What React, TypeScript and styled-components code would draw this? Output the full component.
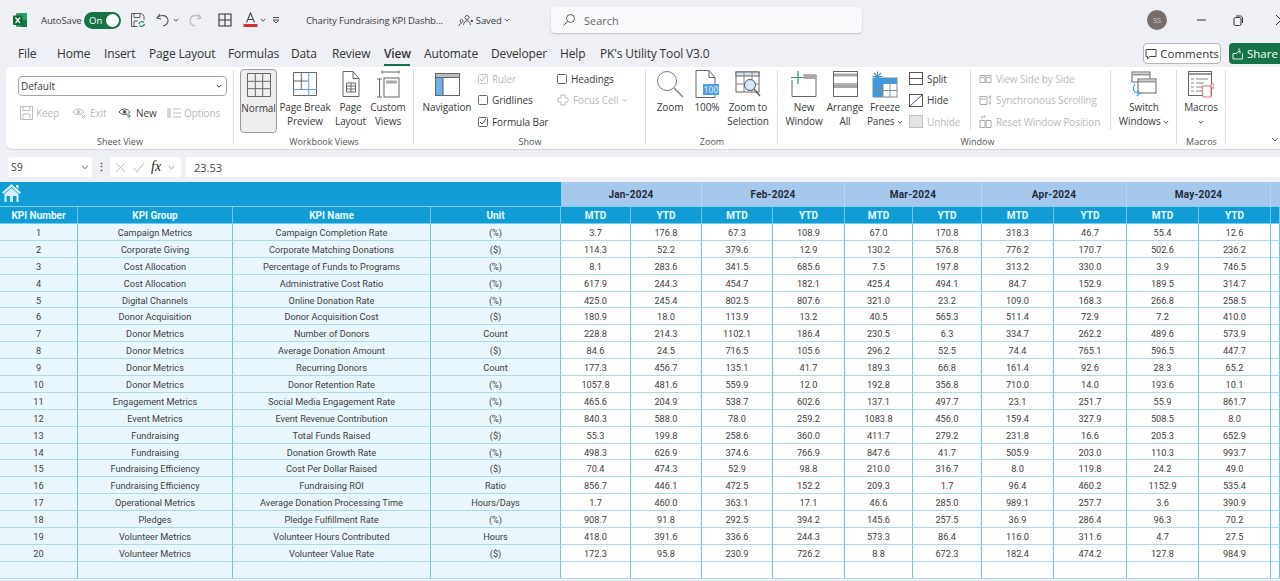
import React from 'react';
import styled, { createGlobalStyle } from 'styled-components';

const Global = createGlobalStyle`
  html, body { margin: 0; padding: 0; height: 581px; overflow: hidden; background: #eef0f5; }
  * { box-sizing: border-box; }
  #root { height: 581px; overflow: hidden; font-family: "Open Sans", "Noto Sans", sans-serif; }
`;

const Window = styled.div`display:flex;flex-direction:column;width:1280px;height:581px;overflow:hidden;background:#eef0f5;color:#333;`;

/* title bar */
const TitleBar = styled.div`display:flex;align-items:center;height:40px;flex:none;position:relative;`;
const Spot = styled.div<{ $w: number; $ml?: number }>`
  display:flex;align-items:center;flex:none;width:${p => p.$w}px;margin-left:${p => p.$ml ?? 0}px;gap:2px;
`;
const SmallLabel = styled.span`font-size:9.5px;color:#3a3a3a;white-space:nowrap;letter-spacing:-.12px;`;
const Toggle = styled.div`
  width:37px;height:17px;flex:none;border-radius:9px;background:#157347;color:#fff;font-size:9.5px;display:flex;align-items:center;
  justify-content:space-between;padding:0 2px 0 5px;
  &::after{content:"";width:13px;height:13px;border-radius:50%;background:#fff;}
`;
const SearchBox = styled.div`
  width:311px;height:26px;margin-left:31px;flex:none;background:#f8f9fb;border-radius:4px;box-shadow:0 1px 2px rgba(0,0,0,.2);
  display:flex;align-items:center;gap:8px;padding-left:11px;font-size:11px;color:#666;
`;
const Avatar = styled.div`
  width:20px;height:20px;border-radius:50%;background:#776e6b;color:#cfc8c5;font-size:7.5px;display:flex;align-items:center;justify-content:center;
  margin-left:285px;flex:none;
`;
const WinBtn = styled.div<{ $ml: number }>`margin-left:${p => p.$ml}px;display:flex;flex:none;`;

/* tabs */
const TabRow = styled.div`display:flex;align-items:center;height:27px;flex:none;padding-left:18px;position:relative;`;
const Tab = styled.div<{ $active?: boolean; $w: number }>`
  flex:none;width:${p => p.$w}px;font-size:12px;line-height:27px;height:27px;color:#333;white-space:nowrap;position:relative;letter-spacing:-.15px;
  font-weight:${p => (p.$active ? 600 : 400)};
  ${p => p.$active && `&::after{content:"";position:absolute;left:0;width:26px;bottom:1px;height:2px;background:#1a6e45;}`}
`;
const TabEnd = styled.div`margin-left:auto;display:flex;align-items:center;gap:8px;`;
const Comments = styled.div`
  width:78px;height:21px;border:1px solid #b5b5b5;border-radius:4px;background:#fff;font-size:11.5px;display:flex;align-items:center;justify-content:center;gap:3px;color:#333;
`;
const Share = styled.div`
  width:51px;height:21px;border-radius:4px 0 0 4px;background:#157347;color:#fff;font-size:11.5px;display:flex;align-items:center;gap:3px;padding-left:3px;
`;

/* ribbon */
const Ribbon = styled.div`
  margin-left:6px;height:82px;flex:none;background:#fff;border-radius:6px 0 0 6px;display:flex;box-shadow:0 1px 1px rgba(0,0,0,.12);position:relative;
`;
const Group = styled.div<{ $w: number; $last?: boolean }>`
  width:${p => p.$w}px;flex:none;display:flex;flex-direction:column;position:relative;
  ${p => !p.$last && `&::after{content:"";position:absolute;right:0;top:3px;bottom:5px;width:1px;background:#dcdcdc;}`}
`;
const GroupBody = styled.div<{ $pl: number }>`height:69px;flex:none;display:flex;padding:2px 0 0 ${p => p.$pl}px;`;
const GroupLabel = styled.div`height:13px;font-size:9px;line-height:12px;text-align:center;color:#555;flex:none;`;
const Big = styled.div<{ $w: number; $ml?: number; $sel?: boolean }>`
  width:${p => p.$w}px;margin-left:${p => p.$ml ?? 0}px;height:${p => (p.$sel ? 64 : 65)}px;flex:none;display:flex;flex-direction:column;align-items:center;
  font-size:10px;line-height:14px;text-align:center;color:#3a3a3a;letter-spacing:-.1px;white-space:nowrap;
  ${p => p.$sel && `background:#eeeeee;border:1px solid #9a9a9a;border-radius:4px;`}
`;
const BigIcon = styled.div`height:28px;flex:none;display:flex;align-items:center;justify-content:center;margin-top:1px;`;
const BigText = styled.div`margin-top:2px;`;
const Column = styled.div<{ $w: number; $ml?: number }>`
  width:${p => p.$w}px;margin-left:${p => p.$ml ?? 0}px;flex:none;display:flex;flex-direction:column;margin-top:-1px;
`;
const Line = styled.div<{ $off?: boolean }>`
  height:21.5px;display:flex;align-items:center;gap:4px;font-size:10px;white-space:nowrap;letter-spacing:-.1px;color:${p => (p.$off ? '#b9b9b9' : '#3a3a3a')};
`;
const Check = styled.span<{ $off?: boolean }>`
  width:10px;height:10px;border:1px solid ${p => (p.$off ? '#c4c4c4' : '#666')};border-radius:1.5px;flex:none;display:flex;align-items:center;justify-content:center;background:#fff;
`;
const StyleSelect = styled.div`
  width:209px;height:20px;margin:7px 0 0 12px;border:1px solid #a5a5a5;border-radius:4px;font-size:10px;display:flex;align-items:center;justify-content:space-between;padding:0 4px 0 2px;color:#3a3a3a;
`;
const SheetCol = styled.div`display:flex;flex-direction:column;`;
const ViewRow = styled.div`display:flex;margin:7px 0 0 14px;`;
const ViewItem = styled.div<{ $w: number; $off?: boolean }>`
  width:${p => p.$w}px;height:20px;flex:none;display:flex;align-items:center;gap:3px;font-size:10px;letter-spacing:-.1px;color:${p => (p.$off ? '#b9b9b9' : '#3a3a3a')};
`;
const SubSep = styled.div`width:1px;height:60px;background:#dcdcdc;margin-top:1px;flex:none;`;
const Corner = styled.div`position:absolute;right:2px;bottom:6px;display:flex;`;

/* formula bar */
const FormulaBar = styled.div`display:flex;align-items:center;height:20px;margin-top:8px;flex:none;`;
const NameBox = styled.div`
  width:84px;height:20px;margin-left:8px;background:#fff;border-radius:2px;font-size:10.5px;display:flex;align-items:center;justify-content:space-between;padding:0 3px;color:#444;flex:none;
`;
const Dots = styled.div`width:18px;text-align:center;font-size:11px;font-weight:700;color:#555;flex:none;line-height:20px;`;
const FxBox = styled.div`
  width:71px;height:20px;margin-left:0;background:#fff;border-radius:2px;display:flex;align-items:center;gap:7px;padding-left:5px;flex:none;
`;
const FxText = styled.span`font-family:"Liberation Serif",serif;font-style:italic;font-weight:400;font-size:14px;color:#222;margin-left:-1px;`;
const FormulaInput = styled.div`
  flex:1;height:20px;margin-left:5px;background:#fff;font-size:11px;display:flex;align-items:center;padding-left:8px;color:#444;
`;

/* sheet */
const Sheet = styled.div`
  margin-top:5px;display:grid;flex:none;background:#fff;
  grid-template-columns:78px 155px 198px 130px 70px 71px 71px 72px 68px 69px 72px 73px 72px 72px 9px;
  grid-template-rows:25px 17px repeat(21,16.9px);
  font-family:Roboto,"Liberation Sans",sans-serif;
`;
const Banner = styled.div`
  grid-column:span 4;background:#129cd6;border-bottom:1px solid #7fd0ee;display:flex;align-items:flex-start;padding:1px 0 0 1px;
`;
const Month = styled.div`
  grid-column:span 2;background:#a5c8ec;border-right:1px solid #b9d5f0;border-bottom:1px solid #7fd0ee;font-size:10px;font-weight:700;color:#1f2a3a;letter-spacing:.2px;
  display:flex;align-items:center;justify-content:center;
`;
const MonthStub = styled.div`background:#a5c8ec;border-bottom:1px solid #7fd0ee;`;
const Head = styled.div`
  background:#129cd6;border-right:1px solid #6cc8ea;border-bottom:1px solid #74cbe9;color:#e9faff;font-size:10px;font-weight:700;padding-top:1px;
  display:flex;align-items:center;justify-content:center;white-space:nowrap;
`;
const Cell = styled.div<{ $tint?: boolean }>`
  background:${p => (p.$tint ? '#e9f6fc' : '#fff')};border-right:1px solid #6fc4e4;border-bottom:1px solid #a8dbee;font-size:9.2px;color:#3e3e3e;padding-top:1px;
  display:flex;align-items:center;justify-content:center;white-space:nowrap;overflow:hidden;
`;

/* icons */
const S = { fill: 'none', stroke: '#5c5c5c', strokeWidth: 1 } as const;
const Sv = ({ w, h, children }: { w: number; h: number; children: React.ReactNode }) => (
  <svg width={w} height={h} viewBox={`0 0 ${w} ${h}`} style={{ flex: 'none', display: 'inline-block', verticalAlign: 'middle' }}>{children}</svg>
);
const Chev = ({ c = '#555', s = 6 }: { c?: string; s?: number }) => (
  <Sv w={s} h={s}><path d={`M.8 ${s * .32}L${s / 2} ${s * .7}L${s - .8} ${s * .32}`} fill="none" stroke={c} strokeWidth="1" /></Sv>
);
const Logo = () => (
  <Sv w={16} h={16}>
    <rect x="4" y="1" width="11" height="14" rx="1" fill="#33a06a" />
    <rect x="9" y="1" width="6" height="7" fill="#21a366" />
    <rect x="9" y="8" width="6" height="7" fill="#107c41" />
    <rect x="1" y="3.5" width="9.5" height="9.5" rx="1" fill="#0d6a38" />
    <path d="M3.5 5.5l4.5 5.5M8 5.5L3.5 11" stroke="#fff" strokeWidth="1.2" />
  </Sv>
);
const SaveIco = () => (
  <Sv w={16} h={16}>
    <path d="M1.5 1.5h10l2.5 2.5v4M1.5 1.5v13h6" {...S} />
    <path d="M4 1.5v4h6v-4M4 14V9h4" {...S} />
    <path d="M9 12a3 3 0 0 1 5-1.5M14.5 12a3 3 0 0 1-5 1.5" fill="none" stroke="#2f8f5b" strokeWidth="1.2" />
  </Sv>
);
const Undo = ({ off }: { off?: boolean }) => (
  <Sv w={16} h={16}>
    <path d={off ? 'M11 2l3 4-4 1M14 6C10 2 4 3 3 8c-.5 3 2 5.500 5 6' : 'M5 2L2 6l4 1M2 6c4-4 10-3 11 2 .5 3-2 5.500-5 6'} fill="none" stroke={off ? '#b5b5b5' : '#555'} strokeWidth="1.1" />
  </Sv>
);
const Borders = () => (
  <Sv w={14} h={14}><path d="M1 1h12v12H1zM7 1v12M1 7h12" fill="none" stroke="#333" strokeWidth="1.1" /></Sv>
);
const FontColor = () => (
  <Sv w={15} h={16}>
    <path d="M3.500 10.500L7.500 1l4 9.500M5 7.500h5" fill="none" stroke="#444" strokeWidth="1.1" />
    <rect x="0.500" y="12" width="14" height="3" fill="#d92b2b" />
  </Sv>
);
const Customize = () => (
  <Sv w={8} h={9}><path d="M1 1.500h6M1 4l3 3 3-3z" fill="none" stroke="#555" /></Sv>
);
const People = () => (
  <Sv w={14} h={13}>
    <circle cx="9" cy="3.500" r="2" {...S} />
    <path d="M5.500 11c.3-3 1.500-4 3.500-4s3 1 3.500 4" {...S} />
    <circle cx="3.500" cy="7" r="1.500" {...S} />
    <path d="M1 12c.3-2 1-2.500 2.500-2.500" {...S} />
  </Sv>
);
const SearchIco = () => (
  <Sv w={14} h={14}><circle cx="8.500" cy="5.500" r="4" {...S} /><path d="M5.500 8.500L1.500 12.500" {...S} /></Sv>
);
const Restore = () => (
  <Sv w={10} h={11}><rect x="1" y="2.500" width="7" height="8" rx="1.500" fill="none" stroke="#333" /><path d="M3 1h4.500C8.500 1 9.500 2 9.500 3v5" fill="none" stroke="#333" /></Sv>
);
const Bubble = () => (
  <Sv w={12} h={12}><path d="M1 1.500h10v7H4.500L2.500 11V8.500H1z" fill="none" stroke="#444" /></Sv>
);
const ShareIco = () => (
  <Sv w={12} h={12}>
    <path d="M1 5.500h3l4-3v3M1 5.500v5.500h9.500V5.500M6 1.500L8 .8" fill="none" stroke="#fff" strokeWidth=".9" />
  </Sv>
);
const KeepIco = () => (
  <Sv w={13} h={14}><path d="M.5.500h12v13H.5zM3 .500v4h7v-4M3 13.500V8h7v5.500" fill="none" stroke="#bdbdbd" /></Sv>
);
const EyeIco = ({ c = '#bdbdbd', plus }: { c?: string; plus?: boolean }) => (
  <Sv w={15} h={12}>
    <path d="M1 5c3-4 8-4 11 0-3 3.500-8 3.500-11 0z" fill="none" stroke={c} />
    <circle cx="6.500" cy="5" r="1.800" fill={c} />
    {plus ? <path d="M11 7v4M9 9h4" stroke="#3c9a64" /> : <path d="M10 8l3 3M13 8l-3 3" stroke={c} />}
  </Sv>
);
const ListIco = () => (
  <Sv w={14} h={12}><path d="M1 1v10M3 1v10M6 2h8M6 6h8M6 10h8" fill="none" stroke="#bdbdbd" strokeWidth="1.200" /></Sv>
);
const GridNormal = () => (
  <Sv w={24} h={24}><path d="M.500.500h23v23H.500zM8.300.500v23M15.700.500v23M.500 8.300h23M.500 15.700h23" fill="none" stroke="#666" /></Sv>
);
const PageBreakIco = () => (
  <Sv w={24} h={24}><path d="M.500.500h23v23H.500zM8.300.500v17M.500 9h15M.500 17.500h23" fill="none" stroke="#666" /><path d="M15.700.500v23M.500 17.500h23" fill="none" stroke="#5ea6dd" /></Sv>
);
const PageIco = () => (
  <Sv w={18} h={26}>
    <path d="M1 .500h10l6 7v18H1zM11 .500v7h6" fill="none" stroke="#666" />
    <path d="M4.500 12h9v9h-9zM4.500 15h9M4.500 18h9M9 12v9" fill="none" stroke="#666" />
  </Sv>
);
const CustomIco = () => (
  <Sv w={24} h={28}>
    <path d="M6 2h17M6 .500v3M23 .500v3M1 9h5M1 27h5M3.500 9v18" fill="none" stroke="#666" />
    <rect x="8" y="8" width="15" height="19" fill="none" stroke="#666" />
    <rect x="10" y="10.500" width="11" height="3" fill="#aaa" />
  </Sv>
);
const NavIco = () => (
  <Sv w={25} h={23}>
    <rect x=".5" y=".5" width="24" height="22" fill="#fff" stroke="#666" />
    <rect x=".5" y=".5" width="24" height="4" fill="#bbb" stroke="#666" />
    <rect x="1" y="5" width="7" height="17" fill="#6fb0e8" />
    <path d="M8 5v17" stroke="#555" />
  </Sv>
);
const ZoomIco = () => (
  <Sv w={28} h={28}><circle cx="11" cy="11" r="9.500" fill="none" stroke="#777" /><path d="M18 18l9 9" stroke="#777" strokeWidth="1.300" /></Sv>
);
const Page100 = () => (
  <Sv w={25} h={28}>
    <path d="M1 .500h13l6 7v20H1zM14 .500v7h6" fill="none" stroke="#666" />
    <rect x="8" y="14" width="16" height="11" fill="#4f9fdc" />
    <text x="16" y="23" fontSize="8.500" textAnchor="middle" fill="#e7f4ff" fontFamily="Open Sans">100</text>
  </Sv>
);
const ZoomSel = () => (
  <Sv w={27} h={27}>
    <rect x="1" y="1" width="23" height="20" fill="none" stroke="#666" />
    <rect x="1" y="1" width="23" height="4" fill="#cfe3f5" stroke="#666" />
    <path d="M1 13h23M9 1v20M17 1v20" stroke="#888" fill="none" />
    <circle cx="15" cy="14" r="5.500" fill="#d4e8f9" stroke="#555" />
    <path d="M19 18l6 7" stroke="#555" strokeWidth="1.200" />
  </Sv>
);
const NewWin = () => (
  <Sv w={26} h={27}>
    <path d="M1 9v16.500h24V4H12" fill="none" stroke="#666" />
    <rect x="13" y="4" width="12" height="4" fill="#aaa" />
    <path d="M7 0v13M0 6.500h13" stroke="#2f9a5e" strokeWidth="1.200" />
  </Sv>
);
const Arrange = () => (
  <Sv w={25} h={27}>
    <rect x=".5" y=".5" width="24" height="25" fill="none" stroke="#666" />
    <path d="M1 4h23" stroke="#a5a5a5" strokeWidth="3" />
    <path d="M1 13h23" stroke="#666" />
    <path d="M1 15.500h23" stroke="#a5a5a5" strokeWidth="3" />
  </Sv>
);
const Freeze = () => (
  <Sv w={26} h={27}>
    <rect x="1" y="7" width="24" height="19" fill="#fff" stroke="#8a8a8a" />
    <rect x="1" y="7" width="24" height="6" fill="#3f97dc" />
    <rect x="1" y="13" width="10" height="13" fill="#3f97dc" />
    <path d="M11 13v13M1 19.500h24M18 7v19" stroke="#8a8a8a" fill="none" />
    <path d="M5.500 .5v10M.5 5.500h10M2 2l7 7M9 2l-7 7" stroke="#3f97dc" strokeWidth="1.100" />
  </Sv>
);
const SplitIco = () => (
  <Sv w={14} h={13}><rect x=".5" y=".5" width="13" height="12" fill="none" stroke="#555" /><path d="M1 6.500h12" stroke="#555" /></Sv>
);
const HideIco = () => (
  <Sv w={14} h={13}><rect x=".5" y=".5" width="13" height="12" fill="none" stroke="#555" /><path d="M1 12L13 1" stroke="#555" /></Sv>
);
const UnhideIco = () => (
  <Sv w={14} h={13}><rect x=".5" y=".5" width="13" height="12" fill="#e4e4e4" stroke="#c0c0c0" /></Sv>
);
const SideBySide = () => (
  <Sv w={13} h={12}><path d="M1 2.500h5v7H1zM7 2.500h5v7H7z" fill="none" stroke="#aaa" /><path d="M2 4.500h3M8 4.500h3" stroke="#aaa" /></Sv>
);
const SyncScroll = () => (
  <Sv w={13} h={12}><path d="M1 2.500h7v8H1z" fill="none" stroke="#aaa" /><path d="M2 5h5" stroke="#aaa" /><path d="M11 2v8M9.800 3.500L11 1.500l1.200 2M9.800 8.500L11 10.500l1.200-2" fill="none" stroke="#aaa" strokeWidth=".8" /></Sv>
);
const ResetPos = () => (
  <Sv w={13} h={13}><path d="M1 5.500h5v7H1zM7 5.500h5v7H7z" fill="none" stroke="#aaa" /><path d="M3 4V1.500h3M5 .5l1.200 1L5 2.500" fill="none" stroke="#aaa" strokeWidth=".8" /></Sv>
);
const SwitchIco = () => (
  <Sv w={26} h={26}>
    <rect x="1" y="1" width="18" height="10" fill="#fff" stroke="#666" />
    <path d="M1 3.500h18" stroke="#999" strokeWidth="2" />
    <rect x="7" y="8" width="18" height="14" fill="#fff" stroke="#666" />
    <path d="M7 10.500h18" stroke="#999" strokeWidth="2" />
    <path d="M4 13c-3 4-2 8 3 9M6 19l3 3-3 3" fill="none" stroke="#4f9fdc" strokeWidth="1.200" />
  </Sv>
);
const MacroIco = () => (
  <Sv w={26} h={27}>
    <rect x=".5" y=".5" width="23" height="24" fill="#fff" stroke="#666" />
    <path d="M1 3h22" stroke="#999" strokeWidth="2" />
    <path d="M3 8h3M8 8h12M3 12h3M8 12h8M3 16h3M8 16h6M3 20h3M8 20h6" stroke="#888" />
    <path d="M14 15h9v11h-8zM23 13h3v4h-3z" fill="#fff" stroke="#d9716e" />
  </Sv>
);
const Home = () => (
  <Sv w={21} h={20}>
    <path d="M10.500 1L1 9.500l1.500 1.500 8-7 8 7L20 9.500z" fill="#d5f0fb" />
    <path d="M3.500 11l7-6 7 6v8H3.500z" fill="#d5f0fb" />
    <path d="M5.500 13h3.500v6H5.500zM12 13h3.500v6H12z" fill="#129cd6" />
    <path d="M15 2h2.500v4L15 4z" fill="#d5f0fb" />
  </Sv>
);
const Tick = ({ c = '#444' }: { c?: string }) => (
  <Sv w={8} h={8}><path d="M1 4l2 2 4-5" fill="none" stroke={c} /></Sv>
);
const Cross = () => (<Sv w={11} h={11}><path d="M1 1l9 9M10 1l-9 9" stroke="#bcbcbc" /></Sv>);
const CheckMark = () => (<Sv w={12} h={11}><path d="M1 6l3 4 7-9" fill="none" stroke="#bcbcbc" /></Sv>);

const tabs: [string, number, boolean?][] = [
  ['File', 39], ['Home', 47], ['Insert', 45], ['Page Layout', 79], ['Formulas', 63], ['Data', 41], ['Review', 52], ['View', 40, true],
  ['Automate', 67], ['Developer', 69], ['Help', 40], ["PK's Utility Tool V3.0", 150],
];

const data: (string | number)[][] = [
  [1, 'Campaign Metrics', 'Campaign Completion Rate', '(%)', '3.7', '176.8', '67.3', '108.9', '67.0', '170.8', '318.3', '46.7', '55.4', '12.6'],
  [2, 'Corporate Giving', 'Corporate Matching Donations', '($)', '114.3', '52.2', '379.6', '12.9', '130.2', '576.8', '776.2', '170.7', '502.6', '236.2'],
  [3, 'Cost Allocation', 'Percentage of Funds to Programs', '(%)', '8.1', '283.6', '341.5', '685.6', '7.5', '197.8', '313.2', '330.0', '3.9', '746.5'],
  [4, 'Cost Allocation', 'Administrative Cost Ratio', '(%)', '617.9', '244.3', '454.7', '182.1', '425.4', '494.1', '84.7', '152.9', '189.5', '314.7'],
  [5, 'Digital Channels', 'Online Donation Rate', '(%)', '425.0', '245.4', '802.5', '807.6', '321.0', '23.2', '109.0', '168.3', '266.8', '258.5'],
  [6, 'Donor Acquisition', 'Donor Acquisition Cost', '($)', '180.9', '18.0', '113.9', '13.2', '40.5', '565.3', '511.4', '72.9', '7.2', '410.0'],
  [7, 'Donor Metrics', 'Number of Donors', 'Count', '228.8', '214.3', '1102.1', '186.4', '230.5', '6.3', '334.7', '262.2', '489.6', '573.9'],
  [8, 'Donor Metrics', 'Average Donation Amount', '($)', '84.6', '24.5', '716.5', '105.6', '296.2', '52.5', '74.4', '765.1', '596.5', '447.7'],
  [9, 'Donor Metrics', 'Recurring Donors', 'Count', '177.3', '456.7', '135.1', '41.7', '189.3', '66.8', '161.4', '92.6', '28.3', '65.2'],
  [10, 'Donor Metrics', 'Donor Retention Rate', '(%)', '1057.8', '481.6', '559.9', '12.0', '192.8', '356.8', '710.0', '14.0', '193.6', '10.1'],
  [11, 'Engagement Metrics', 'Social Media Engagement Rate', '(%)', '465.6', '204.9', '538.7', '602.6', '137.1', '497.7', '23.1', '251.7', '55.9', '861.7'],
  [12, 'Event Metrics', 'Event Revenue Contribution', '(%)', '840.3', '588.0', '78.0', '259.2', '1083.8', '456.0', '159.4', '327.9', '508.5', '8.0'],
  [13, 'Fundraising', 'Total Funds Raised', '($)', '55.3', '199.8', '258.6', '360.0', '411.7', '279.2', '231.8', '16.6', '205.3', '652.9'],
  [14, 'Fundraising', 'Donation Growth Rate', '(%)', '498.3', '626.9', '374.6', '766.9', '847.6', '41.7', '505.9', '203.0', '110.3', '993.7'],
  [15, 'Fundraising Efficiency', 'Cost Per Dollar Raised', '($)', '70.4', '474.3', '52.9', '98.8', '210.0', '316.7', '8.0', '119.8', '24.2', '49.0'],
  [16, 'Fundraising Efficiency', 'Fundraising ROI', 'Ratio', '856.7', '446.1', '472.5', '152.2', '209.3', '1.7', '96.4', '460.2', '1152.9', '535.4'],
  [17, 'Operational Metrics', 'Average Donation Processing Time', 'Hours/Days', '1.7', '460.0', '363.1', '17.1', '46.6', '285.0', '989.1', '257.7', '3.6', '390.9'],
  [18, 'Pledges', 'Pledge Fulfillment Rate', '(%)', '908.7', '91.8', '292.5', '394.2', '145.6', '257.5', '36.9', '286.4', '96.3', '70.2'],
  [19, 'Volunteer Metrics', 'Volunteer Hours Contributed', 'Hours', '418.0', '391.6', '336.6', '244.3', '573.3', '86.4', '116.0', '311.6', '4.7', '27.5'],
  [20, 'Volunteer Metrics', 'Volunteer Value Rate', '($)', '172.3', '95.8', '230.9', '726.2', '8.8', '672.3', '182.4', '474.2', '127.8', '984.9'],
];
const months = ['Jan-2024', 'Feb-2024', 'Mar-2024', 'Apr-2024', 'May-2024'];

const BigButton = ({ w, ml, sel, icon, lines }: { w: number; ml?: number; sel?: boolean; icon: React.ReactNode; lines: React.ReactNode[] }) => (
  <Big $w={w} $ml={ml} $sel={sel}>
    <BigIcon>{icon}</BigIcon>
    <BigText>{lines.map((l, i) => <div key={i}>{l}</div>)}</BigText>
  </Big>
);

export default function App() {
  return (
    <Window>
      <Global />
      <TitleBar>
        <Spot $w={28} $ml={12}><Logo /></Spot>
        <Spot $w={43} $ml={1}><SmallLabel>AutoSave</SmallLabel></Spot>
        <Toggle>On</Toggle>
        <Spot $w={16} $ml={9}><SaveIco /></Spot>
        <Spot $w={30} $ml={9}><Undo /><Chev /></Spot>
        <Spot $w={22} $ml={2}><Undo off /></Spot>
        <Spot $w={14} $ml={9}><Borders /></Spot>
        <Spot $w={26} $ml={11}><FontColor /><Chev /></Spot>
        <Spot $w={8} $ml={3}><Customize /></Spot>
        <Spot $w={142} $ml={26}><SmallLabel>Charity Fundraising KPI Dashb...</SmallLabel></Spot>
        <Spot $w={14} $ml={10}><People /></Spot>
        <Spot $w={50} $ml={-2}><SmallLabel>• Saved</SmallLabel><Chev /></Spot>
        <SearchBox><SearchIco />Search</SearchBox>
        <Avatar>SS</Avatar>
        <WinBtn $ml={30}><Sv w={9} h={2}><path d="M0 1h9" stroke="#333" /></Sv></WinBtn>
        <WinBtn $ml={27}><Restore /></WinBtn>
        <WinBtn $ml={33}><Sv w={10} h={10}><path d="M0 0l10 10M10 0L0 10" stroke="#333" /></Sv></WinBtn>
      </TitleBar>

      <TabRow>
        {tabs.map(([t, w, a]) => <Tab key={t} $w={w} $active={a}>{t}</Tab>)}
        <TabEnd>
          <Comments><Bubble />Comments</Comments>
          <Share><ShareIco />Share</Share>
        </TabEnd>
      </TabRow>

      <Ribbon>
        <Group $w={228}>
          <GroupBody $pl={0}>
            <SheetCol>
              <StyleSelect>Default<Chev c="#333" /></StyleSelect>
              <ViewRow>
                <ViewItem $w={52} $off><KeepIco />Keep</ViewItem>
                <ViewItem $w={46} $off><EyeIco />Exit</ViewItem>
                <ViewItem $w={49}><EyeIco c="#555" plus />New</ViewItem>
                <ViewItem $w={55} $off><ListIco />Options</ViewItem>
              </ViewRow>
            </SheetCol>
          </GroupBody>
          <GroupLabel>Sheet View</GroupLabel>
        </Group>
        <Group $w={180}>
          <GroupBody $pl={6}>
            <BigButton w={37} sel icon={<GridNormal />} lines={['Normal']} />
            <BigButton w={52} ml={2} icon={<PageBreakIco />} lines={['Page Break', 'Preview']} />
            <BigButton w={33} ml={3} icon={<PageIco />} lines={['Page', 'Layout']} />
            <BigButton w={38} ml={2} icon={<CustomIco />} lines={['Custom', 'Views']} />
          </GroupBody>
          <GroupLabel>Workbook Views</GroupLabel>
        </Group>
        <Group $w={232}>
          <GroupBody $pl={7}>
            <BigButton w={52} icon={<NavIco />} lines={['Navigation']} />
            <Column $w={79} $ml={5}>
              <Line $off><Check $off><Tick c="#b5b5b5" /></Check>Ruler</Line>
              <Line><Check />Gridlines</Line>
              <Line><Check><Tick /></Check>Formula Bar</Line>
            </Column>
            <Column $w={80}>
              <Line><Check />Headings</Line>
              <Line $off><Sv w={12} h={12}><path d="M4 1h4v3h3v4H8v3H4V8H1V4h3z" fill="none" stroke="#bdbdbd" /></Sv>Focus Cell <Chev c="#bbb" /></Line>
            </Column>
          </GroupBody>
          <GroupLabel>Show</GroupLabel>
        </Group>
        <Group $w={132}>
          <GroupBody $pl={8}>
            <BigButton w={32} icon={<ZoomIco />} lines={['Zoom']} />
            <BigButton w={30} ml={6} icon={<Page100 />} lines={['100%']} />
            <BigButton w={46} ml={3} icon={<ZoomSel />} lines={['Zoom to', 'Selection']} />
          </GroupBody>
          <GroupLabel>Zoom</GroupLabel>
        </Group>
        <Group $w={399}>
          <GroupBody $pl={6}>
            <BigButton w={40} icon={<NewWin />} lines={['New', 'Window']} />
            <BigButton w={38} ml={2} icon={<Arrange />} lines={['Arrange', 'All']} />
            <BigButton w={38} ml={2} icon={<Freeze />} lines={[<>Freeze</>, <>Panes <Chev /></>]} />
            <Column $w={61} $ml={5}>
              <Line><SplitIco />Split</Line>
              <Line><HideIco />Hide</Line>
              <Line $off><UnhideIco />Unhide</Line>
            </Column>
            <SubSep />
            <Column $w={131} $ml={8}>
              <Line $off><SideBySide />View Side by Side</Line>
              <Line $off><SyncScroll />Synchronous Scrolling</Line>
              <Line $off><ResetPos />Reset Window Position</Line>
            </Column>
            <SubSep />
            <BigButton w={56} ml={5} icon={<SwitchIco />} lines={['Switch', <>Windows <Chev /></>]} />
          </GroupBody>
          <GroupLabel>Window</GroupLabel>
        </Group>
        <Group $w={49}>
          <GroupBody $pl={4}>
            <BigButton w={40} icon={<MacroIco />} lines={['Macros', <Chev key="c" />]} />
          </GroupBody>
          <GroupLabel>Macros</GroupLabel>
        </Group>
        <Corner><Sv w={7} h={7}><path d="M1 2l3 3 3-3" fill="none" stroke="#555" /></Sv></Corner>
      </Ribbon>

      <FormulaBar>
        <NameBox>S9<Chev c="#666" s={8} /></NameBox>
        <Dots>⋮</Dots>
        <FxBox><Cross /><CheckMark /><FxText>fx</FxText><Chev c="#999" s={7} /></FxBox>
        <FormulaInput>23.53</FormulaInput>
      </FormulaBar>

      <Sheet>
        <Banner><Home /></Banner>
        {months.map(m => <Month key={m}>{m}</Month>)}
        <MonthStub />
        {['KPI Number', 'KPI Group', 'KPI Name', 'Unit'].map(h => <Head key={h}>{h}</Head>)}
        {months.flatMap(m => ['MTD', 'YTD'].map(k => <Head key={m + k}>{k}</Head>))}
        <Head />
        {data.map(row => (
          <React.Fragment key={String(row[0])}>
            {row.map((v, i) => <Cell key={i} $tint={i < 4}>{v}</Cell>)}
            <Cell />
          </React.Fragment>
        ))}
        {Array.from({ length: 15 }, (_, i) => <Cell key={i} $tint={i < 4} />)}
      </Sheet>
    </Window>
  );
}
